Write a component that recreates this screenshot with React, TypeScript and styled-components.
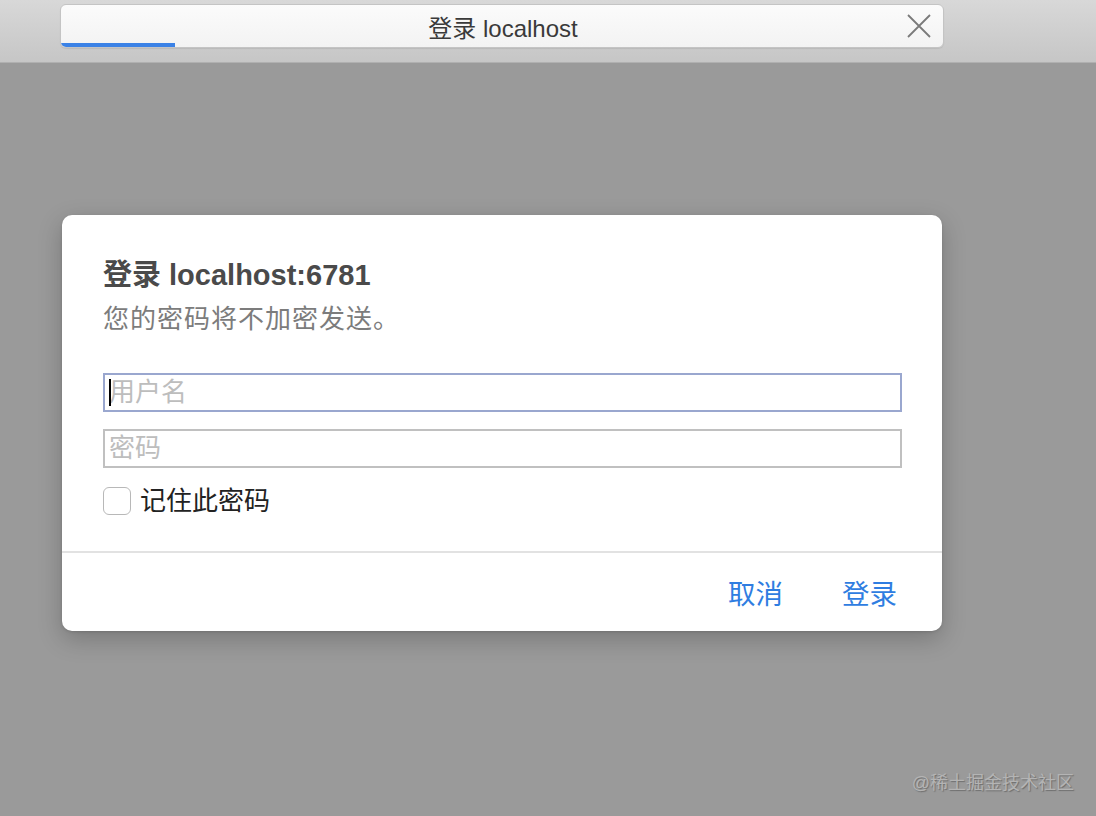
import React from 'react';
import styled, { createGlobalStyle } from 'styled-components';

const cjk = `"Liberation Sans", "Noto Sans CJK SC", sans-serif`;

export default function App() {
    return (
        <>
            <GlobalStyle />
            <Page>
                <TopBar>
                    <Tab>
                        <TabTitle>登录 localhost</TabTitle>
                        <TabClose aria-label="关闭">
                            <svg width="24" height="24" viewBox="0 0 24 24">
                                <path d="M1 1 L23 23 M23 1 L1 23" stroke="#7a7a7a" strokeWidth="1.8" fill="none" />
                            </svg>
                        </TabClose>
                        <TabProgress />
                    </Tab>
                </TopBar>

                <Stage>
                    <Dialog>
                        <DialogBody>
                            <DialogTitle>登录 localhost:6781</DialogTitle>
                            <DialogSubtitle>您的密码将不加密发送。</DialogSubtitle>

                            <FieldWrap first>
                                <Field focused placeholder="用户名" />
                                <Caret />
                            </FieldWrap>
                            <FieldWrap>
                                <Field type="password" placeholder="密码" />
                            </FieldWrap>

                            <RememberRow>
                                <CheckBox type="checkbox" />
                                <RememberLabel>记住此密码</RememberLabel>
                            </RememberRow>
                        </DialogBody>

                        <DialogFooter>
                            <FooterButton>取消</FooterButton>
                            <FooterButton>登录</FooterButton>
                        </DialogFooter>
                    </Dialog>
                </Stage>

                <Watermark>@稀土掘金技术社区</Watermark>
            </Page>
        </>
    );
}

const GlobalStyle = createGlobalStyle`
    html, body {
        margin: 0;
        padding: 0;
        background: #9a9a9a;
    }

    * {
        box-sizing: border-box;
    }
`;

const Page = styled.div`
    position: relative;
    width: 1096px;
    height: 816px;
    background: #9a9a9a;
    font-family: ${cjk};
    overflow: hidden;
`;

const TopBar = styled.div`
    height: 63px;
    padding: 4px 0 0 60px;
    background: linear-gradient(to bottom, #d8d8d8, #c6c6c6);
    border-bottom: 1px solid #b0b0b0;
`;

const Tab = styled.div`
    position: relative;
    width: 884px;
    height: 44px;
    display: flex;
    align-items: center;
    justify-content: center;
    background: linear-gradient(to bottom, #fbfbfb, #f3f3f3);
    border: 1px solid #c4c4c4;
    border-radius: 6px;
    overflow: hidden;
    box-shadow: 0 1px 1px rgba(0, 0, 0, 0.08);
`;

const TabTitle = styled.span`
    font-size: 24px;
    color: #3a3a3a;
    margin-left: 2px;
`;

const TabClose = styled.button`
    position: absolute;
    right: 12px;
    top: 9px;
    padding: 0;
    border: 0;
    background: none;
    display: flex;
`;

const TabProgress = styled.div`
    position: absolute;
    left: 0;
    bottom: 0;
    width: 114px;
    height: 4px;
    background: #3b82e6;
`;

const Stage = styled.div`
    padding: 152px 0 0 62px;
`;

const Dialog = styled.div`
    width: 880px;
    height: 416px;
    background: #ffffff;
    border-radius: 10px;
    box-shadow: 0 8px 24px rgba(0, 0, 0, 0.22), 0 1px 3px rgba(0, 0, 0, 0.12);
    display: flex;
    flex-direction: column;
`;

const DialogBody = styled.div`
    flex: 1;
    padding: 42px 40px 0 41px;
    display: flex;
    flex-direction: column;
`;

const DialogTitle = styled.h2`
    margin: 0;
    font-size: 29px;
    line-height: 36px;
    font-weight: 700;
    color: #4a4a4a;
`;

const DialogSubtitle = styled.p`
    margin: 9px 0 0;
    font-size: 26px;
    line-height: 34px;
    letter-spacing: 1px;
    color: #7c7c7c;
`;

const FieldWrap = styled.div<{ first?: boolean }>`
    position: relative;
    margin-top: ${(props) => (props.first ? '37px' : '17px')};
`;

const Field = styled.input<{ focused?: boolean }>`
    display: block;
    width: 799px;
    height: 39px;
    padding: 0 4px;
    border: 2px solid ${(props) => (props.focused ? '#9aa7cf' : '#c0c0c0')};
    border-radius: 0;
    outline: none;
    font-family: ${cjk};
    font-size: 26px;
    color: #222;

    &::placeholder {
        color: #bdbdbd;
    }
`;

const Caret = styled.span`
    position: absolute;
    left: 6px;
    top: 6px;
    width: 2px;
    height: 27px;
    background: #000;
`;

const RememberRow = styled.label`
    display: flex;
    align-items: center;
    gap: 9px;
    margin-top: 18px;
`;

const CheckBox = styled.input`
    appearance: none;
    margin: 0;
    width: 28px;
    height: 28px;
    border: 1.5px solid #b8b8b8;
    border-radius: 6px;
    background: #fff;
`;

const RememberLabel = styled.span`
    font-size: 26px;
    line-height: 30px;
    color: #222;
`;

const DialogFooter = styled.div`
    height: 80px;
    border-top: 2px solid #e2e2e2;
    display: flex;
    align-items: center;
    justify-content: flex-end;
    gap: 59px;
    padding: 0 45px 0 0;
`;

const FooterButton = styled.button`
    padding: 0;
    border: 0;
    background: none;
    font-family: ${cjk};
    font-size: 27.5px;
    color: #2f7de1;
    cursor: pointer;
`;

const Watermark = styled.div`
    position: absolute;
    right: 22px;
    bottom: 22px;
    font-size: 18px;
    color: #b4b4b4;
    text-shadow: 1px 1px 1px #6e6e6e;
`;
